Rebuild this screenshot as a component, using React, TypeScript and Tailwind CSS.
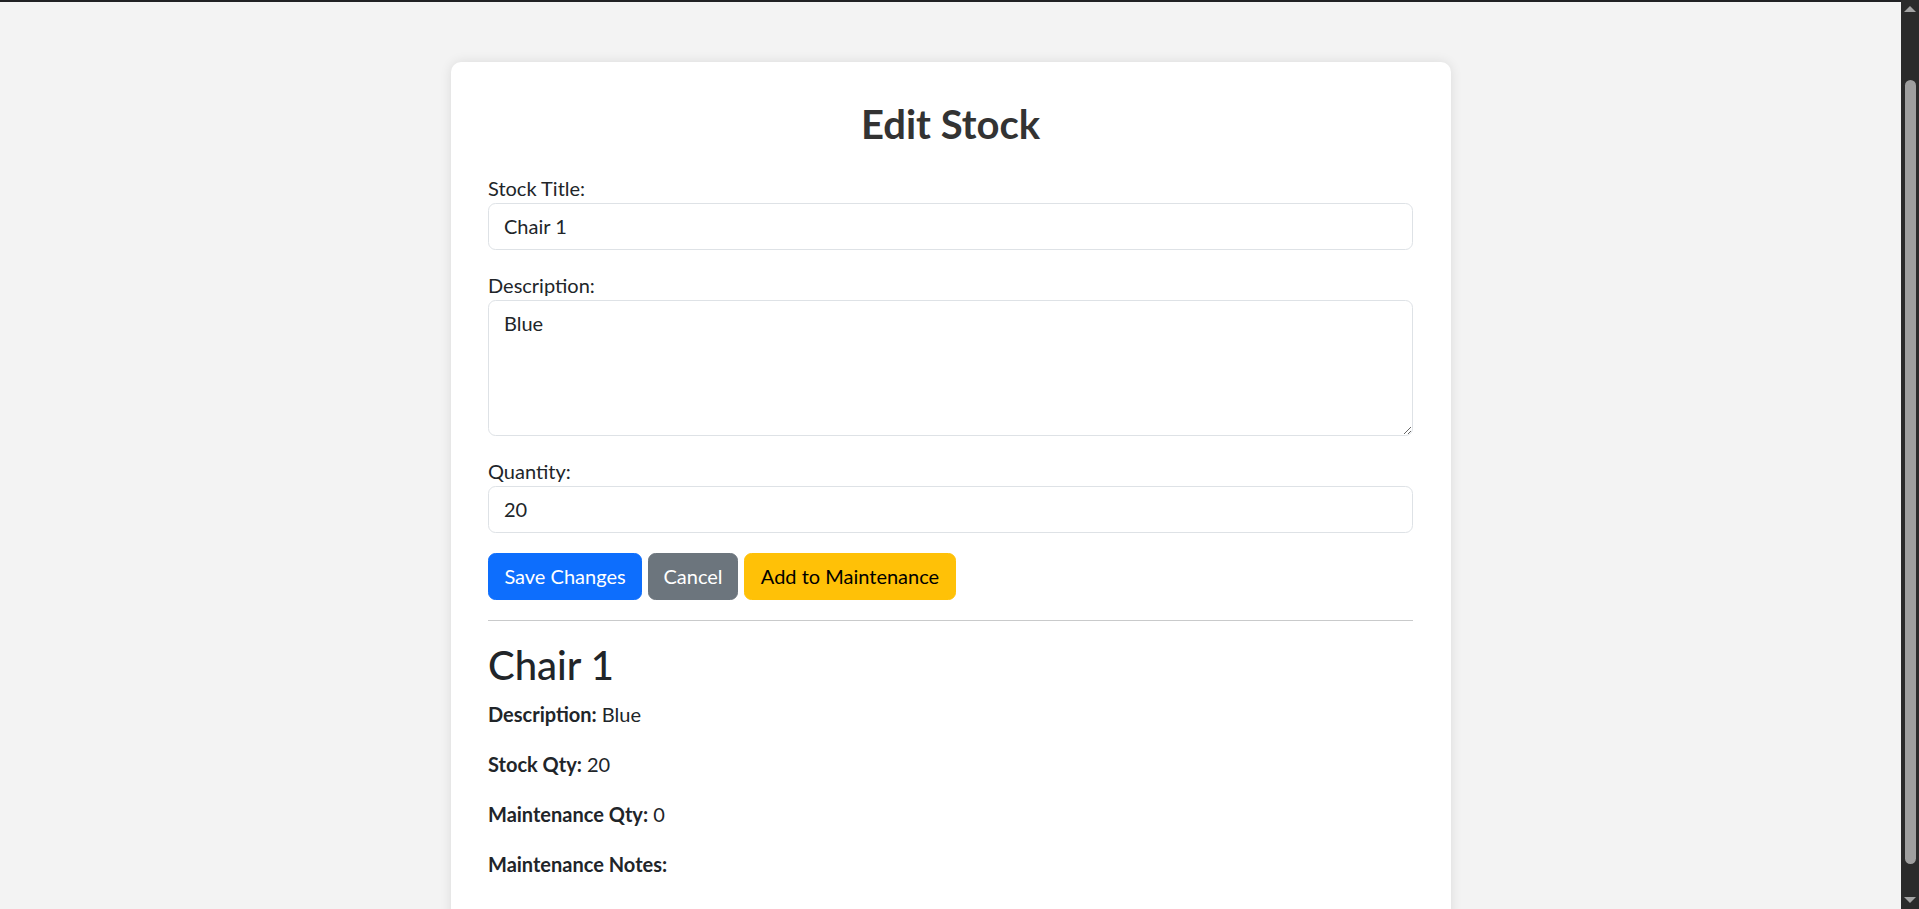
import { useLayoutEffect, useRef } from "react";

function Field({ label, children }: { label: string; children: React.ReactNode }) {
  return (
    <div className="mb-[20px]">
      <label className="block leading-[30px]">{label}</label>
      {children}
    </div>
  );
}

function ScrollBar() {
  return (
    <div className="flex h-full w-[18px] shrink-0 flex-col bg-[#2b2b2b]">
      <div className="flex h-[18px] shrink-0 items-center justify-center">
        <svg width="12" height="6" viewBox="0 0 12 6">
          <polygon points="0,6 6,0 12,6" fill="#a3a3a3" />
        </svg>
      </div>
      <div className="min-h-0 flex-1 pt-[62px]">
        <div className="ml-[4px] h-[784px] w-[11px] rounded-full bg-[#9f9f9f]" />
      </div>
      <div className="flex h-[18px] shrink-0 items-center justify-center">
        <svg width="12" height="6" viewBox="0 0 12 6">
          <polygon points="0,0 12,0 6,6" fill="#a3a3a3" />
        </svg>
      </div>
    </div>
  );
}

export default function App() {
  const ref = useRef<HTMLDivElement>(null);
  useLayoutEffect(() => {
    if (ref.current) ref.current.scrollTop = 72;
  }, []);

  return (
    <div className="flex h-screen bg-[#f3f3f3] font-['Lato',sans-serif] text-[20px] leading-[30px] text-[#212529]">
      <div className="flex min-w-0 flex-1 flex-col">
        <div className="h-[2px] shrink-0 bg-[#202124]" />
        <div ref={ref} className="min-h-0 flex-1 overflow-hidden">
          <div className="pt-[132px]">
            <div className="mx-auto w-[1000px] rounded-[10px] bg-white px-[37.5px] py-[37.5px] shadow-[0_0_12px_rgba(0,0,0,0.1)]">
              <h2 className="mb-[25px] text-center text-[40px] font-bold leading-[48px] text-[#333]">
                Edit Stock
              </h2>

              <Field label="Stock Title:">
                <input
                  type="text"
                  defaultValue="Chair 1"
                  className="block h-[47px] w-full rounded-[7.5px] border border-[#dee2e6] bg-white px-[15px] text-[20px] leading-[30px] text-[#212529] outline-none"
                />
              </Field>

              <Field label="Description:">
                <textarea
                  defaultValue="Blue"
                  className="block h-[136px] w-full rounded-[7.5px] border border-[#dee2e6] bg-white px-[15px] py-[7.5px] text-[20px] leading-[30px] text-[#212529] outline-none"
                />
              </Field>

              <Field label="Quantity:">
                <input
                  type="number"
                  defaultValue="20"
                  className="block h-[47px] w-full appearance-none rounded-[7.5px] border border-[#dee2e6] bg-white px-[15px] text-[20px] leading-[30px] text-[#212529] outline-none [&::-webkit-inner-spin-button]:appearance-none"
                />
              </Field>

              <div className="flex gap-[6px]">
                <button className="h-[47px] w-[154px] rounded-[7.5px] border border-[#0d6efd] bg-[#0d6efd] text-[20px] text-white">
                  Save Changes
                </button>
                <button className="h-[47px] w-[90px] rounded-[7.5px] border border-[#6c757d] bg-[#6c757d] text-[20px] text-white">
                  Cancel
                </button>
                <button className="h-[47px] w-[212px] rounded-[7.5px] border border-[#ffc107] bg-[#ffc107] text-[20px] text-black">
                  Add to Maintenance
                </button>
              </div>

              <hr className="my-[20px] border-0 border-t border-[#c9cacb]" />

              <h2 className="mb-[10px] text-[40px] font-medium leading-[48px] text-[#212529]">Chair 1</h2>
              <p className="mb-[20px]">
                <strong className="font-bold">Description:</strong> Blue
              </p>
              <p className="mb-[20px]">
                <strong className="font-bold">Stock Qty:</strong> 20
              </p>
              <p className="mb-[20px]">
                <strong className="font-bold">Maintenance Qty:</strong> 0
              </p>
              <p className="mb-[20px]">
                <strong className="font-bold">Maintenance Notes:</strong>
              </p>
            </div>
          </div>
        </div>
      </div>
      <ScrollBar />
    </div>
  );
}
